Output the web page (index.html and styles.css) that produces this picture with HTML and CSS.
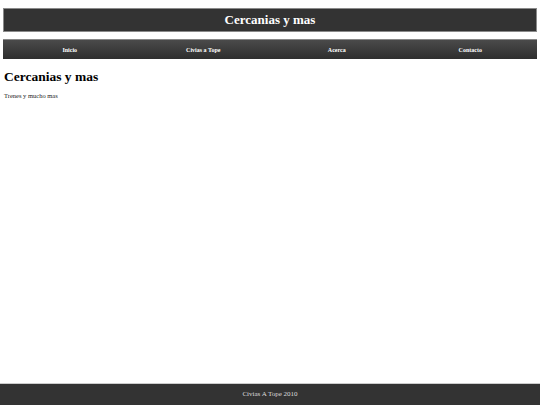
FILE: index.html
```html
<!DOCTYPE html>
<html>
<head>
<meta charset="utf-8">
<link rel="stylesheet" href="styles.css">
</head>
<body>
<div class="page">
  <header class="site-header">Cercanias y mas</header>
  <nav class="menu">
    <a href="#">Inicio</a>
    <a href="#">Civias a Tope</a>
    <a href="#">Acerca</a>
    <a href="#">Contacto</a>
  </nav>
  <main class="content">
    <h1>Cercanias y mas</h1>
    <p>Trenes y mucho mas</p>
  </main>
</div>
<footer class="site-footer">Civias A Tope 2010</footer>
</body>
</html>
```
FILE: styles.css
```css
html, body { margin: 0; padding: 0; height: 100%; }
body {
  font-family: "Liberation Serif", "Times New Roman", serif;
  background: #fff;
  color: #000;
  display: flex;
  flex-direction: column;
}
.page { flex: 1; padding: 8px 3px 0; }
.site-header {
  background: #333;
  border: 1px solid #8a8a8a;
  color: #fff;
  font-weight: bold;
  font-size: 13px;
  text-align: center;
  height: 22px;
  line-height: 22px;
}
.menu {
  margin-top: 7px;
  display: grid;
  grid-template-columns: repeat(4, 1fr);
  background: linear-gradient(#4a4a4a, #2e2e2e);
  border-top: 1px solid #888;
  height: 19px;
  align-items: center;
}
.menu a {
  color: #fff;
  text-decoration: none;
  font-weight: bold;
  font-size: 6px;
  text-align: center;
}
.content h1 { font-size: 13.5px; margin: 10px 1px 7px; }
.content p { font-size: 6.5px; margin: 0 1px; color: #222; }
.site-footer {
  background: #333;
  border-top: 1px solid #ccc;
  color: #ddd;
  text-align: center;
  font-size: 7px;
  height: 21px;
  line-height: 21px;
}
```
